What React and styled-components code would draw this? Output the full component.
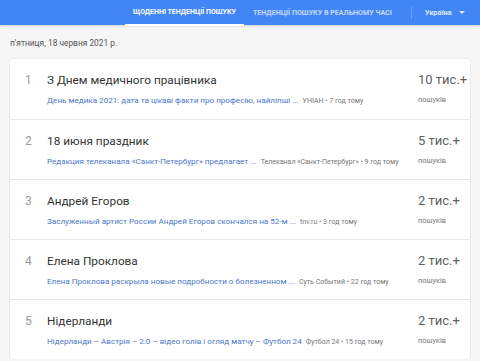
import styled, { createGlobalStyle } from "styled-components";

const Global = createGlobalStyle`
  body {
    margin: 0;
    background: #f6f6f6;
    font-family: Roboto, "Noto Sans", Arial, sans-serif;
  }
`;

const TopBar = styled.header`
  height: 25px;
  background: #4285f4;
  display: flex;
  align-items: stretch;
  padding-left: 125px;
  box-shadow: 0 1px 2px rgba(0, 0, 0, 0.15);
`;

const Tab = styled.div`
  display: flex;
  align-items: center;
  justify-content: center;
  padding: 0 ${(p) => p.$pad}px;
  font-size: ${(p) => (p.$active ? 7 : 7.1)}px;
  font-weight: 700;
  text-transform: uppercase;
  color: ${(p) => (p.$active ? "#fff" : "rgba(255,255,255,0.7)")};
  border-bottom: 2px solid ${(p) => (p.$active ? "#fff" : "transparent")};
  margin-bottom: -1px;
  white-space: nowrap;
`;

const Divider = styled.div`
  width: 1px;
  height: 12px;
  align-self: center;
  background: rgba(255, 255, 255, 0.25);
  margin-left: 10px;
`;

const Country = styled.div`
  display: flex;
  align-items: center;
  gap: 7px;
  padding-left: 13px;
  font-size: 7.4px;
  font-weight: 700;
  color: rgba(255, 255, 255, 0.85);
`;

const Caret = styled.span`
  width: 0;
  height: 0;
  border-left: 3px solid transparent;
  border-right: 3px solid transparent;
  border-top: 3.5px solid rgba(255, 255, 255, 0.85);
`;

const Main = styled.main`
  padding: 0 10px;
`;

const DateLine = styled.div`
  padding: 13px 0 0;
  height: 21px;
  font-size: 8.4px;
  color: #555;
`;

const Card = styled.section`
  background: #fff;
  border-radius: 2px;
  box-shadow: 0 0 2px rgba(0, 0, 0, 0.12), 0 1px 2px rgba(0, 0, 0, 0.06);
`;

const Row = styled.div`
  height: 60px;
  display: grid;
  grid-template-columns: 37px 1fr 52px;
  border-top: ${(p) => (p.$first ? "none" : "1px solid #e6e6e6")};
  box-sizing: border-box;
`;

const Index = styled.div`
  padding: 14px 0 0 15px;
  font-size: 12px;
  color: #9a9a9a;
`;

const Body = styled.div`
  padding-top: 13px;
  min-width: 0;
`;

const Title = styled.div`
  font-size: 11.8px;
  color: #333;
  line-height: 17px;
`;

const Meta = styled.div`
  margin-top: 6px;
  font-size: 8.1px;
  white-space: nowrap;
  overflow: hidden;
`;

const Link = styled.span`
  color: #4a78c8;
`;

const Source = styled.span`
  color: #777;
  margin-left: 4px;
  font-size: 7px;
`;

const Count = styled.div`
  padding-top: 11px;
  white-space: nowrap;
`;

const Value = styled.div`
  font-size: 13px;
  color: #5f5f5f;
  line-height: 19px;
`;

const Label = styled.div`
  margin-top: 6px;
  font-size: 7.4px;
  color: #777;
`;

const trends = [
  {
    title: "З Днем медичного працівника",
    link: "День медика 2021: дата та цікаві факти про професію, найліпші ...",
    source: "УНІАН • 7 год тому",
    count: "10 тис.+",
  },
  {
    title: "18 июня праздник",
    link: "Редакция телеканала «Санкт-Петербург» предлагает ...",
    source: "Телеканал «Санкт-Петербург» • 9 год тому",
    count: "5 тис.+",
  },
  {
    title: "Андрей Егоров",
    link: "Заслуженный артист России Андрей Егоров скончался на 52-м ...",
    source: "tnv.ru • 3 год тому",
    count: "2 тис.+",
  },
  {
    title: "Елена Проклова",
    link: "Елена Проклова раскрыла новые подробности о болезненном ...",
    source: "Суть Событий • 22 год тому",
    count: "2 тис.+",
  },
  {
    title: "Нідерланди",
    link: "Нідерланди – Австрія – 2:0 – відео голів і огляд матчу – Футбол 24",
    source: "Футбол 24 • 15 год тому",
    count: "2 тис.+",
  },
];

export default function App() {
  return (
    <>
      <Global />
      <TopBar>
        <Tab $active $pad={8}>Щоденні тенденції пошуку</Tab>
        <Tab $pad={9}>Тенденції пошуку в реальному часі</Tab>
        <Divider />
        <Country>
          Україна
          <Caret />
        </Country>
      </TopBar>
      <Main>
        <DateLine>п'ятниця, 18 червня 2021 р.</DateLine>
        <Card>
          {trends.map((t, i) => (
            <Row key={t.title} $first={i === 0}>
              <Index>{i + 1}</Index>
              <Body>
                <Title>{t.title}</Title>
                <Meta>
                  <Link>{t.link}</Link>
                  <Source>{t.source}</Source>
                </Meta>
              </Body>
              <Count>
                <Value>{t.count}</Value>
                <Label>пошуків</Label>
              </Count>
            </Row>
          ))}
        </Card>
      </Main>
    </>
  );
}
